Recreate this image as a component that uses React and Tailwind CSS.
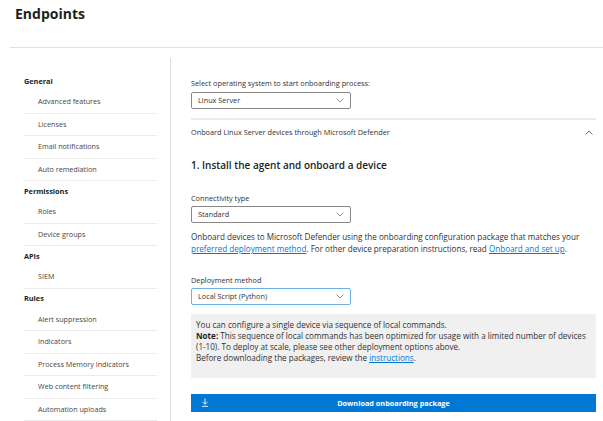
import React from 'react'

const font = { fontFamily: '"Open Sans", "Noto Sans", sans-serif' }

const nav = [
    { title: 'General', items: ['Advanced features', 'Licenses', 'Email notifications', 'Auto remediation'] },
    { title: 'Permissions', items: ['Roles', 'Device groups'] },
    { title: 'APIs', items: ['SIEM'] },
    { title: 'Rules', items: ['Alert suppression', 'Indicators', 'Process Memory Indicators', 'Web content filtering', 'Automation uploads'] },
]

function ChevronDown() {
    return (
        <svg width="8" height="5" viewBox="0 0 8 5" className="shrink-0">
            <path d="M0.5 0.5 L4 4 L7.5 0.5" fill="none" stroke="#8a8886" strokeWidth="0.9" />
        </svg>
    )
}

function Select({ value, focused }) {
    return (
        <div
            className={`flex h-[17px] w-[160px] items-center justify-between rounded-[2px] border pl-[6px] pr-[6px] text-[7.3px] text-[#323130] ${focused ? 'border-[#6cb0e8]' : 'border-[#8a8886]'}`}
        >
            <span>{value}</span>
            <ChevronDown />
        </div>
    )
}

export default function App() {
    return (
        <div style={font} className="h-[421px] w-[603px] overflow-hidden bg-white text-[#323130]">
            {/* header */}
            <div className="h-[47px] pl-[15px] pt-[3px]">
                <h1 className="text-[14px] font-bold leading-[22px] text-[#201f1e]">Endpoints</h1>
            </div>
            <div className="ml-[10px] border-t border-[#e1dfdd]" />

            <div className="ml-[10px] mt-[10px] flex">
                {/* settings nav */}
                <aside className="w-[161px] shrink-0 border-r border-[#e1dfdd] pl-[14px] pr-[13px] pt-[13px]">
                    {nav.map((group) => (
                        <div key={group.title}>
                            <div className="flex h-[20px] items-center text-[7.3px] font-bold text-[#201f1e]">{group.title}</div>
                            {group.items.map((item) => (
                                <div key={item} className="flex h-[22.5px] items-center border-b border-[#edebe9] pl-[14px] text-[7.2px] text-[#484644]">
                                    {item}
                                </div>
                            ))}
                        </div>
                    ))}
                </aside>

                {/* onboarding */}
                <main className="flex-1 pl-[20px] pr-[7px] pt-[20px]">
                    <p className="text-[7.3px] leading-[11px]">Select operating system to start onboarding process:</p>
                    <div className="mt-[3px]">
                        <Select value="Linux Server" />
                    </div>
                    <div className="mt-[9px] border-t-2 border-[#edebe9]" />

                    <div className="flex h-[24px] items-center justify-between pr-[3px] text-[7.3px]">
                        <span>Onboard Linux Server devices through Microsoft Defender</span>
                        <svg width="8" height="5" viewBox="0 0 8 5">
                            <path d="M0.5 4.5 L4 1 L7.5 4.5" fill="none" stroke="#605e5c" strokeWidth="0.9" />
                        </svg>
                    </div>

                    <h2 className="mt-[14px] text-[10px] font-semibold leading-[14px] text-[#201f1e]">1. Install the agent and onboard a device</h2>

                    <p className="mt-[21px] text-[7.3px] leading-[11px]">Connectivity type</p>
                    <div className="mt-[2px]">
                        <Select value="Standard" />
                    </div>

                    <p className="mt-[8px] text-[8.1px] leading-[12px]">
                        Onboard devices to Microsoft Defender using the onboarding configuration package that matches your{' '}
                        <span className="text-[#0078d4] underline">preferred deployment method</span>. For other device preparation instructions, read{' '}
                        <span className="text-[#0078d4] underline">Onboard and set up</span>.
                    </p>

                    <p className="mt-[20px] text-[7.3px] leading-[11px]">Deployment method</p>
                    <div className="mt-[2px]">
                        <Select value="Local Script (Python)" focused />
                    </div>

                    <div className="mt-[9px] h-[64px] bg-[#f0f0f0] px-[5px] pt-[5px] text-[8.1px] leading-[11px]">
                        <p>You can configure a single device via sequence of local commands.</p>
                        <p>
                            <span className="font-bold text-[#201f1e]">Note:</span> This sequence of local commands has been optimized for usage with a limited number of devices (1-10). To deploy at scale, please see other deployment options above.
                        </p>
                        <p>
                            Before downloading the packages, review the <span className="text-[#0078d4] underline">instructions</span>.
                        </p>
                    </div>

                    <button className="relative mt-[16px] flex h-[18px] w-full items-center justify-center bg-[#0078d4] text-[7.3px] font-bold text-white">
                        <svg width="8" height="9" viewBox="0 0 8 9" className="absolute left-[10px] top-[4px]">
                            <path d="M4 0.5 V6 M1.5 3.8 L4 6.3 L6.5 3.8 M1 8.3 H7" fill="none" stroke="white" strokeWidth="0.9" />
                        </svg>
                        Download onboarding package
                    </button>
                </main>
            </div>
        </div>
    )
}
